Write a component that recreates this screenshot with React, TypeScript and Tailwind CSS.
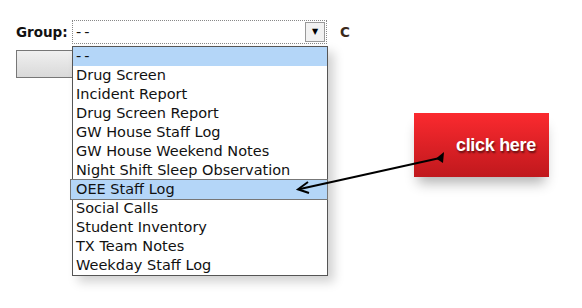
import React from 'react'

const options = [
  '--',
  'Drug Screen',
  'Incident Report',
  'Drug Screen Report',
  'GW House Staff Log',
  'GW House Weekend Notes',
  'Night Shift Sleep Observation',
  'OEE Staff Log',
  'Social Calls',
  'Student Inventory',
  'TX Team Notes',
  'Weekday Staff Log',
]

const App: React.FC = () => {
  return (
    <div className="relative w-[582px] h-[308px] bg-white overflow-hidden font-['DejaVu_Sans',sans-serif] text-[14.5px] text-[#111]">
      {/* form row */}
      <div className="pt-[20px] pl-[16px] flex items-center">
        <span className="font-bold text-[13.5px] w-[56px]">Group:</span>
        <div className="w-[255px] h-[24px] border border-dotted border-[#888] flex items-center bg-white">
          <span className="flex-1 pl-[3px] leading-none tracking-[3px]">--</span>
          <div className="w-[20px] h-[20px] mr-[1px] border border-[#999] bg-[#f2f2f2] flex items-center justify-center">
            <span className="text-[8px] leading-none text-black">▼</span>
          </div>
        </div>
        <span className="ml-[13px] font-bold text-[13.5px] text-[#3a2a1a]">C</span>
      </div>

      <div className="mt-[6px] ml-[16px] w-[310px] h-[28px] border border-[#777] bg-gradient-to-b from-[#f0f0f0] to-[#d9d9d9]" />

      {/* open dropdown */}
      <div className="absolute left-[72px] top-[46px] w-[256px] bg-white border border-[#555] shadow-[6px_6px_10px_rgba(0,0,0,0.18)]">
        {options.map((o, i) =>
          o === 'OEE Staff Log' ? (
            <div
              key={o}
              className="-ml-[3px] -mr-[1px] h-[21px] -my-[1px] relative pl-[5px] bg-[#b4d6f8] border border-[#777] flex items-center"
            >
              {o}
            </div>
          ) : (
            <div
              key={o}
              className={`h-[19px] pl-[3px] flex items-center ${i === 0 ? 'bg-[#b4d6f8] tracking-[3px]' : ''}`}
            >
              {o}
            </div>
          )
        )}
      </div>

      {/* red button callout */}
      <div className="absolute left-[414px] top-[113px] w-[135px] h-[64px] bg-gradient-to-b from-[#fb2a2f] to-[#c0181d] shadow-[0_10px_12px_-4px_rgba(0,0,0,0.3)] flex items-center justify-end pr-[13px]">
        <span className="font-['Liberation_Sans',sans-serif] font-bold text-[18px] tracking-[-0.3px] text-white [text-shadow:1px_2px_2px_rgba(0,0,0,0.55)]">
          click here
        </span>
      </div>

      {/* annotation arrow */}
      <svg className="absolute left-0 top-0 z-20" width="582" height="308">
        <line x1="440" y1="158" x2="300" y2="189" stroke="#000" strokeWidth="2" />
        <polygon points="436,158.5 444,152 443,163" fill="#000" />
        <polyline points="308,182 298,189.3 309,193" fill="none" stroke="#000" strokeWidth="2" strokeLinejoin="miter" />
      </svg>
    </div>
  )
}

export default App
